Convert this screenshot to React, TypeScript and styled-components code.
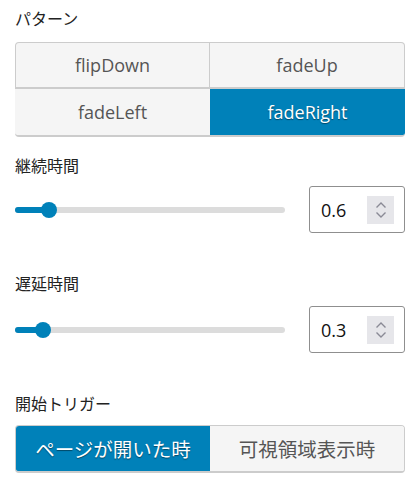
import styled, { createGlobalStyle, css } from "styled-components";
import { useState } from "react";

const GlobalStyle = createGlobalStyle`
    html, body {
        margin: 0;
        padding: 0;
        background: #ffffff;
    }
    body {
        font-family: "Open Sans", "Noto Sans CJK JP", sans-serif;
        color: #222;
    }
`

const Panel = styled.div`
    width: 390px;
    padding: 8px 14px 0 15px;
    display: flex;
    flex-direction: column;
`

const Section = styled.div<{ $top: number }>`
    margin-top: ${(p) => p.$top}px;
    display: flex;
    flex-direction: column;
`

const Label = styled.div<{ $gap: number }>`
    font-family: "Noto Sans CJK JP", sans-serif;
    font-size: 16px;
    line-height: 20px;
    height: 20px;
    color: #222;
    margin-bottom: ${(p) => p.$gap}px;
`

const PatternGrid = styled.div`
    display: grid;
    grid-template-columns: 1fr 1fr;
    grid-template-rows: 47px 48px;
`

const activeStyle = css`
    background-color: #0081b9;
    color: #fff;
    text-shadow: 0 1px 1px rgba(0, 0, 0, 0.45);
`

const PatternButton = styled.button<{ $active?: boolean; $corner: string; $first?: boolean }>`
    font-family: "Open Sans", "Noto Sans CJK JP", sans-serif;
    font-size: 18px;
    color: #555;
    background-color: #f5f5f5;
    border: none;
    border-bottom: 2px solid #cccccc;
    ${(p) => p.$first && css`
        border-top: 1px solid #cccccc;
        border-right: 1px solid #cccccc;
    `}
    padding: 0;
    cursor: pointer;
    border-radius: ${(p) => p.$corner};
    &:first-child {
        border-left: 1px solid #cccccc;
    }
    ${(p) => p.$active && activeStyle}
`

const SliderRow = styled.div`
    display: flex;
    align-items: center;
    justify-content: space-between;
    height: 47px;
`

const Track = styled.div`
    position: relative;
    width: 270px;
    height: 6px;
    border-radius: 3px;
    background: #dcdcdc;
`

const Fill = styled.div`
    position: absolute;
    left: 0;
    top: 0;
    bottom: 0;
    border-radius: 3px;
    background: #0081b9;
`

const Thumb = styled.div`
    position: absolute;
    top: 50%;
    width: 16px;
    height: 16px;
    margin: -8px 0 0 -8px;
    border-radius: 50%;
    background: #0081b9;
`

const NumberBox = styled.div`
    box-sizing: border-box;
    width: 96px;
    height: 47px;
    border: 1px solid #8f8f8f;
    border-radius: 3px;
    display: flex;
    align-items: center;
    justify-content: space-between;
    padding: 0 10px 0 11px;
    font-size: 18px;
    color: #111;
`

const Spinner = styled.div`
    width: 27px;
    height: 28px;
    background: #e6e6ea;
    display: flex;
    align-items: center;
    justify-content: center;
`

const Segmented = styled.div`
    display: flex;
    height: 48px;
    box-sizing: border-box;
    border: 1px solid #cccccc;
    border-bottom-width: 2px;
    border-radius: 4px;
    overflow: hidden;
`

const SegButton = styled.button<{ $active?: boolean }>`
    flex: 1;
    border: none;
    padding: 0;
    font-family: "Noto Sans CJK JP", sans-serif;
    font-size: 19.5px;
    color: #555;
    background-color: #f5f5f5;
    cursor: pointer;
    ${(p) => p.$active && activeStyle}
`

const patterns = ["flipDown", "fadeUp", "fadeLeft", "fadeRight"];
const corners = ["4px 0 0 0", "0 4px 0 0", "0 0 0 4px", "0 0 4px 0"];

const SpinIcon = () => (
    <svg width="14" height="20" viewBox="0 0 14 20" fill="none" stroke="#8a8a96" strokeWidth="1.4">
        <polyline points="2.5,7.5 7,3 11.5,7.5" />
        <polyline points="2.5,12.5 7,17 11.5,12.5" />
    </svg>
);

const Slider = ({ value, frac }: { value: string; frac: number }) => (
    <SliderRow>
        <Track>
            <Fill style={{ width: `${frac * 100}%` }} />
            <Thumb style={{ left: `${frac * 100}%` }} />
        </Track>
        <NumberBox>
            <span>{value}</span>
            <Spinner>
                <SpinIcon />
            </Spinner>
        </NumberBox>
    </SliderRow>
);

const App: React.FC = () => {
    const [pattern, setPattern] = useState("fadeRight");
    const [trigger, setTrigger] = useState(0);

    return (
        <>
            <GlobalStyle />
            <Panel>
                <Section $top={0}>
                    <Label $gap={14}>パターン</Label>
                    <PatternGrid>
                        {patterns.map((p, i) => (
                            <PatternButton
                                key={p}
                                $active={pattern === p}
                                $first={i < 2}
                                $corner={corners[i]}
                                onClick={() => setPattern(p)}
                            >
                                {p}
                            </PatternButton>
                        ))}
                    </PatternGrid>
                </Section>
                <Section $top={18}>
                    <Label $gap={11}>継続時間</Label>
                    <Slider value="0.6" frac={0.126} />
                </Section>
                <Section $top={40}>
                    <Label $gap={13}>遅延時間</Label>
                    <Slider value="0.3" frac={0.104} />
                </Section>
                <Section $top={40}>
                    <Label $gap={12}>開始トリガー</Label>
                    <Segmented>
                        <SegButton $active={trigger === 0} onClick={() => setTrigger(0)}>ページが開いた時</SegButton>
                        <SegButton $active={trigger === 1} onClick={() => setTrigger(1)}>可視領域表示時</SegButton>
                    </Segmented>
                </Section>
            </Panel>
        </>
    );
};

export default App;
